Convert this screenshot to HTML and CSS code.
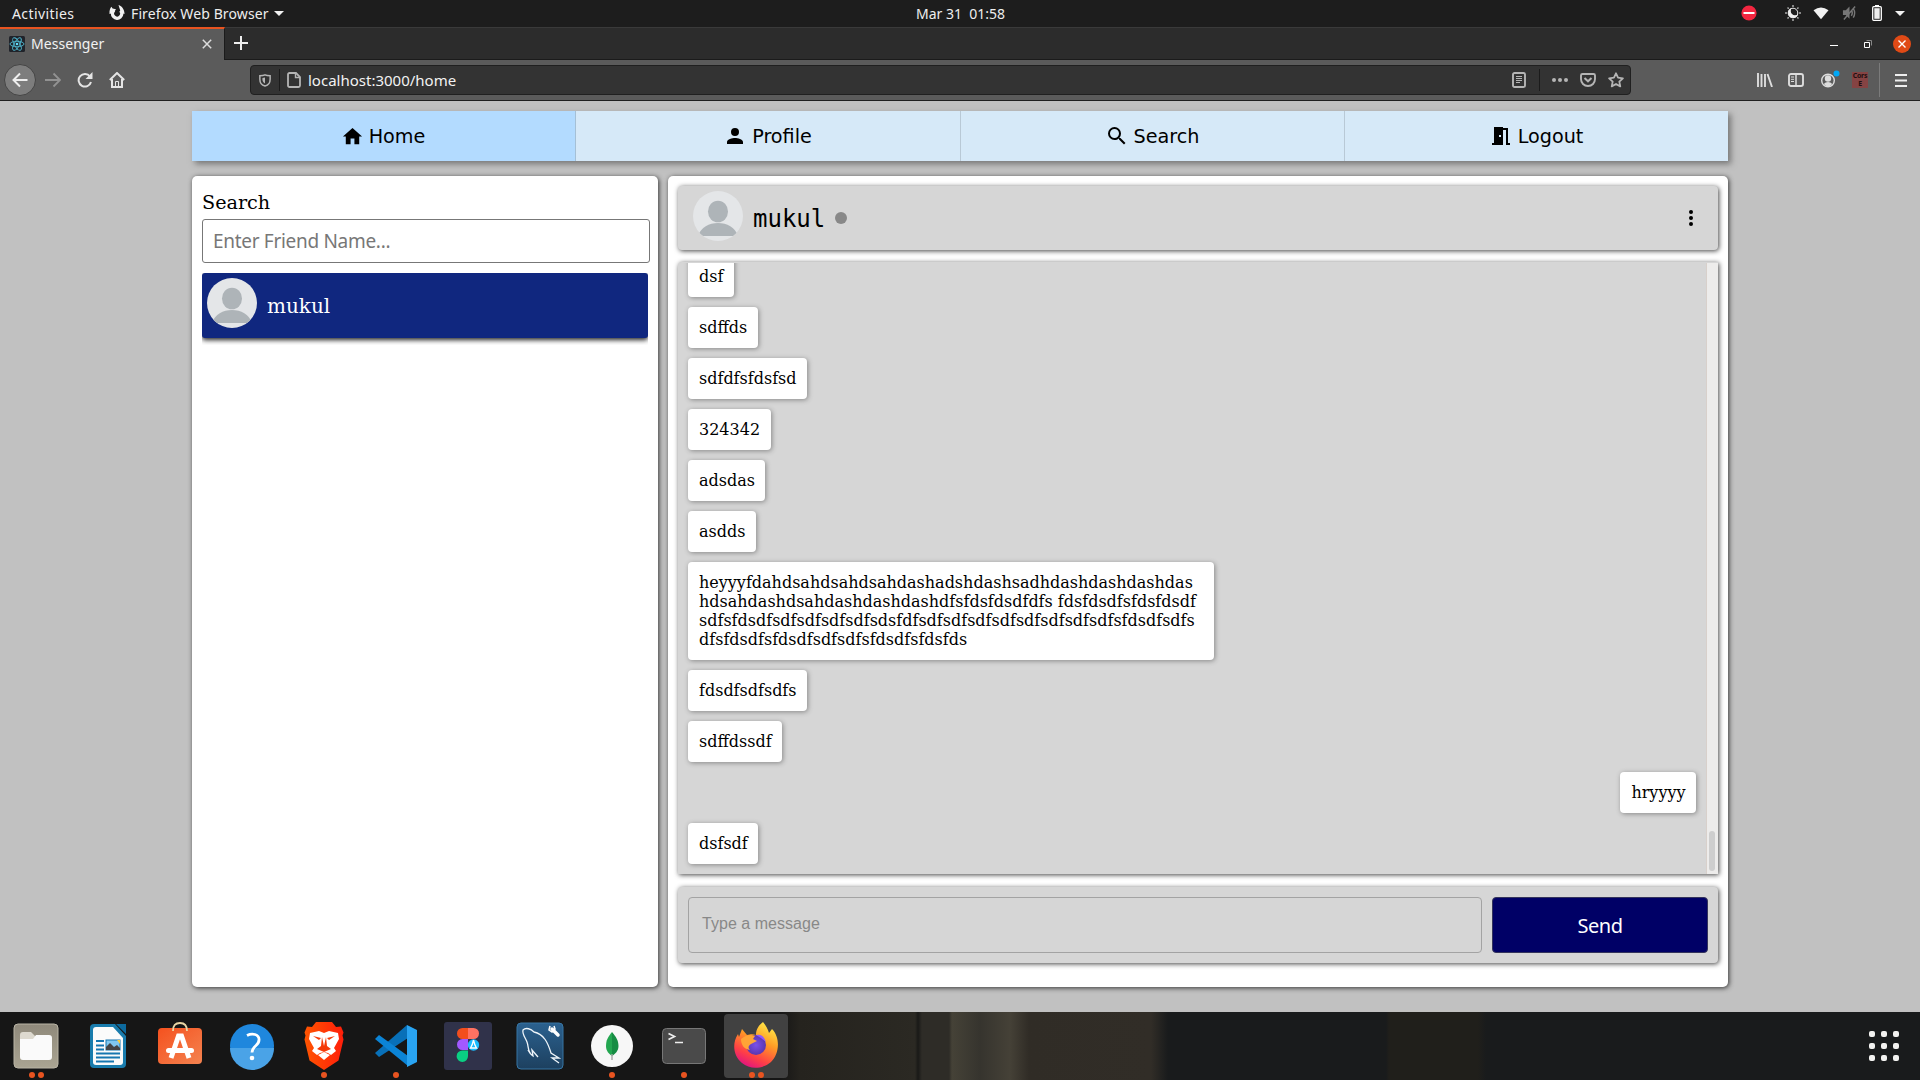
FILE: index.html
```html
<!DOCTYPE html>
<html lang="en">
<head>
<meta charset="utf-8">
<title>Messenger</title>
<link rel="stylesheet" href="styles.css">
</head>
<body>
<svg class="defs" width="0" height="0">
  <defs>
    <symbol id="avatar" viewBox="0 0 50 50">
      <clipPath id="round"><circle cx="25" cy="25" r="25"/></clipPath>
      <g clip-path="url(#round)"><rect width="50" height="50" fill="#e4e6e8"/><ellipse cx="25" cy="20.5" rx="10" ry="10.8" fill="#aeb4b8"/><path d="M5 45C8 36 16 32 25 32s17 4 20 13z" fill="#aeb4b8"/></g>
    </symbol>
    <linearGradient id="g-files" x2="0" y2="1"><stop stop-color="#8f897b"/><stop offset="1" stop-color="#aaa492"/></linearGradient>
    <linearGradient id="g-orange" x2="1" y2="1"><stop stop-color="#f5511e"/><stop offset="1" stop-color="#f48350"/></linearGradient>
    <linearGradient id="g-brave" x2="1"><stop stop-color="#ff5500"/><stop offset="1" stop-color="#ff1e0a"/></linearGradient>
    <linearGradient id="g-sql" x2="0" y2="1"><stop stop-color="#2b618f"/><stop offset="1" stop-color="#1d405f"/></linearGradient>
    <linearGradient id="g-fox" x1=".8" y1="0" x2=".3" y2="1"><stop stop-color="#fff04a"/><stop offset=".4" stop-color="#ff9b25"/><stop offset=".75" stop-color="#ff4045"/><stop offset="1" stop-color="#e01283"/></linearGradient>
    <radialGradient id="g-globe"><stop stop-color="#7b50e8"/><stop offset="1" stop-color="#5a36b0"/></radialGradient>
  </defs>
</svg>

<header class="topbar">
  <span class="activities">Activities</span>
  <svg class="ff" viewBox="0 0 16 16"><path d="M5 5.200A4.600 4.600 0 1 0 11.500 5.500" fill="none" stroke="#f2f2f2" stroke-width="3.400"/><path d="M.5 9C.3 5.500 1 3.500 2.400 1.800L3.600 3.500 7 4.200 5.500 6.500 4 8zM9.500 0c3.500 1 6 4.500 6 9l-3.500-1z" fill="#f2f2f2"/></svg>
  <span class="appname">Firefox Web Browser</span>
  <i class="caret"></i>
  <span class="clock">Mar 31&nbsp; 01:58</span>
  <div class="tray">
    <svg class="dnd" viewBox="0 0 16 16"><circle cx="8" cy="8" r="7.6" fill="#f32640"/><path d="M2.5 8h11" stroke="#fff" stroke-width="2"/></svg>
    <svg class="night" viewBox="0 0 16 16"><path d="M8 0v2M8 14v2M0 8h2M14 8h2M2.5 2.5l1.3 1.3M12.2 12.2l1.3 1.3M2.5 13.5l1.3-1.3M12.2 3.8l1.3-1.3" stroke="#aaa" stroke-width="1.5"/><circle cx="8" cy="8" r="4.8" fill="none" stroke="#eee"/><path d="M7 3a5 5 0 1 0 6 6 4 4 0 0 1-6-6z" fill="#eee"/></svg>
    <svg class="wifi" viewBox="0 0 16 16"><path d="M0 4.5Q8-1.5 16 4.5L8 14z" fill="#f2f2f2"/></svg>
    <svg class="mute" viewBox="0 0 16 16"><path d="M1 5h3l4-4v13l-4-4H1z" fill="#777"/><path d="M10 5q2 3 0 6M12 3q3 5 0 10M2 15 14 1" fill="none" stroke="#777" stroke-width="1.5"/></svg>
    <svg class="battery" viewBox="0 0 10 16"><path d="M3 0h4v2H3z" fill="#fff"/><rect x=".7" y="1.7" width="8.6" height="13.6" rx="1" fill="none" stroke="#fff" stroke-width="1.3"/><path d="M2.3 3.2h5.4v10.6H2.3z" fill="#eee"/></svg>
    <i class="caret"></i>
  </div>
</header>

<div class="tabs">
  <div class="tab">
    <svg class="react" viewBox="0 0 16 16"><rect width="16" height="16" rx="1.5" fill="#20232a"/><g fill="none" stroke="#4fb4cc" stroke-width=".9"><ellipse cx="8" cy="8" rx="7" ry="2.7"/><ellipse cx="8" cy="8" rx="7" ry="2.7" transform="rotate(60 8 8)"/><ellipse cx="8" cy="8" rx="7" ry="2.7" transform="rotate(120 8 8)"/></g><circle cx="8" cy="8" r="1.3" fill="#61dafb"/></svg>
    <span class="tabname">Messenger</span>
    <svg class="x" viewBox="0 0 10 10"><path d="M.8.8l8.4 8.4M9.2.8.8 9.2" stroke="#ddd" stroke-width="1.5"/></svg>
  </div>
  <svg class="plus" viewBox="0 0 14 14"><path d="M7 0v14M0 7h14" stroke="#eee" stroke-width="2"/></svg>
  <div class="winbtns">
    <svg class="min" viewBox="0 0 8 2"><path d="M0 .5h8" stroke="#fff"/></svg>
    <svg class="max" viewBox="0 0 8 8"><path d="M2.5.5h5v5" fill="none" stroke="#888"/><path d="M.5 2.5h5v5h-5z" fill="#2c2c2c" stroke="#fff"/></svg>
    <svg class="close" viewBox="0 0 18 18"><circle cx="9" cy="9" r="9" fill="#e04a16"/><path d="M5.5 5.5l7 7M12.5 5.5l-7 7" stroke="#fff" stroke-width="1.4"/></svg>
  </div>
</div>

<div class="toolbar">
  <span class="back"><svg viewBox="0 0 16 16"><path d="M15.5 8H1M8 1.500 1.500 8 8 14.500" fill="none" stroke="#eee" stroke-width="2"/></svg></span>
  <svg class="fwd" viewBox="0 0 16 16"><path d="M0 8h15M8.500 1.500 15 8l-6.500 6.500" fill="none" stroke="#929292" stroke-width="1.800"/></svg>
  <svg class="reload" viewBox="0 0 16 16"><path d="M13 4.500A6.300 6.300 0 1 0 14 10" fill="none" stroke="#e4e4e4" stroke-width="2"/><path d="M15.500 0v7h-7z" fill="#e4e4e4"/></svg>
  <svg class="house" viewBox="0 0 16 16"><path d="M.8 8 8 1l7.200 7M3 7v8h10V7" fill="none" stroke="#e4e4e4" stroke-width="2"/><path d="M6.500 15V9.500h3V15" fill="none" stroke="#e4e4e4"/></svg>
  <div class="url">
    <svg class="shield" viewBox="0 0 14 15"><path d="M7 1c2 1 4 1 6 1v4c0 4-2 7-6 8-4-1-6-4-6-8V2c2 0 4 0 6-1z" fill="none" stroke="#b5b5b5" stroke-width="1.700"/><path d="M7 4v7c-2-1-3-3-3-5V4.500z" fill="#b5b5b5"/></svg>
    <i class="sep"></i>
    <svg class="doc" viewBox="0 0 14 16"><path d="M3 1h6l4 4v8.500a1.500 1.500 0 0 1-1.500 1.500h-9A1.500 1.500 0 0 1 1 13.500V2.500A1.500 1.500 0 0 1 2.500 1z" fill="none" stroke="#b5b5b5" stroke-width="1.800"/><path d="M8.500 1v4.500H13" fill="none" stroke="#b5b5b5" stroke-width="1.400"/></svg>
    <span class="addr">localhost:3000/home</span>
    <svg class="reader" viewBox="0 0 14 16"><rect x="1" y="1" width="12" height="14" rx="1.500" fill="none" stroke="#b5b5b5" stroke-width="1.900"/><path d="M4 4.500h6M4 6.500h6M4 8.500h6M4 10.500h4" stroke="#b5b5b5"/></svg>
    <i class="sep sep2"></i>
    <svg class="dots" viewBox="0 0 16 4"><g fill="#b5b5b5"><circle cx="2" cy="2" r="2"/><circle cx="8" cy="2" r="2"/><circle cx="14" cy="2" r="2"/></g></svg>
    <svg class="pocket" viewBox="0 0 16 14"><path d="M2.500 1h11A1.500 1.500 0 0 1 15 2.500V6c0 4-3 7-7 7S1 10 1 6V2.500A1.500 1.500 0 0 1 2.500 1z" fill="none" stroke="#b5b5b5" stroke-width="1.900"/><path d="M4.500 5 8 8.300 11.500 5" fill="none" stroke="#b5b5b5" stroke-width="2"/></svg>
    <svg class="star" viewBox="0 0 16 16"><path d="M8 1.300l2.050 4.400 4.850.6-3.580 3.300.95 4.800L8 12l-4.270 2.400.95-4.800L1.100 6.300l4.850-.6z" fill="none" stroke="#b5b5b5" stroke-width="1.800" stroke-linejoin="round"/></svg>
  </div>
  <div class="tools">
    <svg class="lib" viewBox="0 0 16 14"><path d="M1 0v14M4.500 1v13M8 1v13M10.500 1l4.500 13" stroke="#ddd" stroke-width="1.900"/></svg>
    <svg class="side" viewBox="0 0 16 14"><rect x="1" y="1" width="14" height="12" rx="2" fill="none" stroke="#ddd" stroke-width="1.900"/><path d="M8 1v12" stroke="#ddd" stroke-width="1.500"/><path d="M3 4h3M3 6.300h3M3 8.500h3" stroke="#ddd"/></svg>
    <svg class="acct" viewBox="0 0 19 18"><circle cx="7" cy="10.500" r="6.300" fill="none" stroke="#ddd" stroke-width="1.400"/><circle cx="7" cy="8.500" r="3.200" fill="#ddd"/><path d="M2.800 14q1.500-2 4.200-2t4.200 2Q9 16.500 7 16.500T2.800 14z" fill="#ddd"/><circle cx="15.500" cy="3.500" r="3" fill="#00a8f7"/></svg>
    <span class="cors">Cors<br>E</span>
    <i class="toolsep"></i>
    <svg class="burger" viewBox="0 0 12 13"><path d="M0 1h12M0 6.500h12M0 12h12" stroke="#eee" stroke-width="2"/></svg>
  </div>
</div>

<main class="page">
  <nav class="nav">
    <a class="link active"><svg viewBox="0 0 24 24"><path d="M10 20v-6h4v6h5v-8h3L12 3 2 12h3v8z"/></svg><span>Home</span></a>
    <a class="link"><svg viewBox="0 0 24 24"><path d="M12 12a4 4 0 1 0 0-8 4 4 0 0 0 0 8zm0 2c-2.700 0-8 1.300-8 4v2h16v-2c0-2.700-5.300-4-8-4z"/></svg><span>Profile</span></a>
    <a class="link"><svg viewBox="0 0 24 24"><path d="M15.500 14h-.79l-.28-.27A6.470 6.470 0 0 0 16 9.500 6.500 6.500 0 1 0 9.500 16c1.610 0 3.090-.59 4.230-1.570l.27.28v.79l5 4.990L20.490 19zm-6 0a4.500 4.500 0 1 1 0-9 4.500 4.500 0 0 1 0 9z"/></svg><span>Search</span></a>
    <a class="link"><svg viewBox="0 0 24 24"><path d="M14 6v15H3v-2h2V3h9v1h5v15h2v2h-4V6zm-4 5v2h2v-2z"/></svg><span>Logout</span></a>
  </nav>
  <div class="columns">
    <aside class="friends">
      <label class="label">Search</label>
      <div class="field">Enter Friend Name...</div>
      <div class="clip"><div class="friend"><svg class="avatar"><use href="#avatar"/></svg><span>mukul</span></div></div>
    </aside>
    <section class="chat">
      <div class="chathead">
        <svg class="avatar"><use href="#avatar"/></svg>
        <span class="who">mukul</span><i class="status"></i>
        <svg class="more" viewBox="0 0 4 16"><circle cx="2" cy="2" r="2"/><circle cx="2" cy="8" r="2"/><circle cx="2" cy="14" r="2"/></svg>
      </div>
      <div class="messages">
        <div class="view">
          <div class="list">
            <p class="msg">dsf</p>
            <p class="msg">sdffds</p>
            <p class="msg">sdfdfsfdsfsd</p>
            <p class="msg">324342</p>
            <p class="msg">adsdas</p>
            <p class="msg">asdds</p>
            <p class="msg long">heyyyfdahdsahdsahdsahdashadshdashsadhdashdashdashdas<br>hdsahdashdsahdashdashdashdfsfdsfdsdfdfs fdsfdsdfsfdsfdsdf<br>sdfsfdsdfsdfsdfsdfsdfsdsfdfsdfsdfsdfsdfsdfsdfsdfsdfsfdsdfsdfs<br>dfsfdsdfsfdsdfsdfsdfsfdsdfsfdsfds</p>
            <p class="msg">fdsdfsdfsdfs</p>
            <p class="msg">sdffdssdf</p>
            <p class="msg mine">hryyyy</p>
            <p class="msg">dsfsdf</p>
          </div>
          <div class="track"><i class="thumb"></i></div>
        </div>
      </div>
      <div class="composer">
        <div class="input">Type a message</div>
        <div class="send">Send</div>
      </div>
    </section>
  </div>
</main>

<footer class="dock">
  <div class="app"><svg viewBox="0 0 48 48"><rect x="2" y="2" width="44" height="44" rx="4" fill="url(#g-files)" stroke="#b9b4a5"/><path d="M8 13q0-3 3-3h8l4 4h14v8H8z" fill="#ddd9cf"/><path d="M8 17h13l3-4h13q3 0 3 3v19q0 3-3 3H11q-3 0-3-3z" fill="#fafafa"/></svg><i></i><i></i></div>
  <div class="app"><svg viewBox="0 0 48 48"><path d="M6 6q0-4 4-4h21l11 12v28q0 4-4 4H10q-4 0-4-4z" fill="#197cad"/><path d="M32 2h10v10z" fill="#0d6a9e"/><path d="M9 8q0-3 3-3h17l10 11v24q0 3-3 3H12q-3 0-3-3z" fill="#fbfbfb"/><path d="M12 19h8M12 23.500h8M12 27.500h8M12 31.500h24M12 35.500h24M12 39.500h18" stroke="#1676b0" stroke-width="2"/><rect x="22" y="18" width="14" height="10" fill="#80c8f0" stroke="#1676b0"/><path d="M22 28v-3l4-4 4 4 3-2 3 3v2z" fill="#444"/><path d="M33 18h3v4z" fill="#fc3"/></svg></div>
  <div class="app"><svg viewBox="0 0 48 48"><rect x="2" y="6" width="44" height="36" rx="4" fill="url(#g-orange)"/><path d="M17 9q0-8 7-8t7 8" fill="none" stroke="#e8d5a4" stroke-width="1.800"/><path d="M15 36l7.500-22h3L33 36" fill="none" stroke="#fff" stroke-width="5"/><rect x="10" y="26" width="28" height="5" rx="2.500" fill="#fff"/></svg></div>
  <div class="app"><svg viewBox="0 0 48 48"><circle cx="24" cy="24" r="22" fill="#1f87dd"/><path d="M2 26h44a22 22 0 0 1-44 0z" fill="#4aa3e7"/><path d="M19 13.500q4-2 8-1c6 2 4.500 8 1 11-3 2.500-4 4-4 7" fill="none" stroke="#fff" stroke-width="2.800"/><circle cx="24" cy="36" r="2.300" fill="#fff"/></svg></div>
  <div class="app"><svg viewBox="0 0 48 48"><path d="M16 0h16l4 5 5-.5 2.500 6-1 3 1 4-5 21L24 48 9.500 38.500l-5-21 1-4-1-3L7 4.500l5 .5z" fill="url(#g-brave)"/><path d="M10 11l9-2 5 2 5-2 9 2 1 6-5 9 2 3-5 4-3-2-4-1-4 1-3 2-5-4 2-3-5-9z" fill="#fff"/><path d="M13 14l8 2-2 2zM35 14l-8 2 2 2zM22 15l-1 9-4 3 7 3 7-3-4-3-1-9-2 9z" fill="#f53a08"/><path d="M18 33l6-3 6 3-6 5z" fill="#fff"/></svg><i></i></div>
  <div class="app"><svg viewBox="0 0 48 48"><path d="M35 3L3 31l4 4L36 16z" fill="#0870b8"/><path d="M3 17l4-4 29 21v10z" fill="#0b84d6"/><path d="M35 3l10 5v32l-10 5z" fill="#29a4f2"/></svg><i></i></div>
  <div class="app"><svg viewBox="0 0 48 48"><rect width="48" height="48" rx="3" fill="#30324a"/><path d="M24 6h-5.500a5.500 5.500 0 0 0 0 11H24z" fill="#f24e1e"/><path d="M24 6h5.500a5.500 5.500 0 0 1 0 11H24z" fill="#ff7262"/><path d="M24 17h-5.500a5.500 5.500 0 0 0 0 11H24z" fill="#a259ff"/><path d="M24 28.500h-5.500A5.700 5.700 0 1 0 24 34z" fill="#0acf83"/><circle cx="29.500" cy="23" r="5.700" fill="#1abcfe"/><path d="M29.500 18q-1 5-3 8h6q-2-3-3-8" fill="none" stroke="#fff" stroke-width="1.300"/></svg></div>
  <div class="app"><svg viewBox="0 0 48 48"><rect x="1" y="1" width="46" height="46" rx="4" fill="url(#g-sql)" stroke="#3775a3"/><path d="M17 34c-6-4-4-9-6-14-2-5-5-8-4-12 3-3 8-1 11 2 10 2 14 11 17 21l8 5-7 0 7 5M12 28c1 2 2 4 5 6l-1-6 6 7" fill="none" stroke="#eef5fa" stroke-width="1.300"/><path d="M36 7l6 6" stroke="#fff" stroke-width="3.500" stroke-linecap="round"/><path d="M34 4l-1 4 3 2 3-3-1-3" stroke="#fff" stroke-width="1.500" fill="none"/></svg></div>
  <div class="app"><svg viewBox="0 0 48 48"><circle cx="24" cy="24" r="21" fill="#f7f7f7"/><path d="M24 10c-4 5-6 8-6 14 0 5 3 8 6 10z" fill="#23a650"/><path d="M24 10c4 5 6.500 8 6.500 14 0 5-3.500 8-6.500 10z" fill="#168c43"/><path d="M24 32v6" stroke="#aaa" stroke-width="1.500"/></svg><i></i></div>
  <div class="app"><svg viewBox="0 0 48 48"><rect x="2.500" y="6.500" width="43" height="35" rx="4" fill="#4a4a4a" stroke="#777"/><path d="M8.500 11.500l6 3-6 3M15 20.500h8" fill="none" stroke="#eee" stroke-width="1.700"/></svg><i></i></div>
  <div class="app current"><svg viewBox="0 0 48 48"><path d="M31 0c3 4 5 7 6 11l3-4c9 9 7 26-1 33-8 7-21 8-29 1C1 34 0 21 6 12l1 3 3-8 5 6c4-1 6-1 9 0 0-6 3-10 7-13z" fill="url(#g-fox)"/><circle cx="24" cy="23" r="10" fill="url(#g-globe)"/><path d="M9 17c6-5 10-4 14-3l-2 3 4 2-6 3c-3 2-3 4-1 6-6-1-9-5-9-11z" fill="#ffa436"/><path d="M24 13q7-2 10 7l-5-4z" fill="#9059ff"/></svg><i></i><i></i></div>
  <svg class="grid" viewBox="0 0 30 30"><g fill="#f2f2f0"><rect width="6" height="6" rx="2"/><rect x="12" width="6" height="6" rx="2"/><rect x="24" width="6" height="6" rx="2"/><rect y="12" width="6" height="6" rx="2"/><rect x="12" y="12" width="6" height="6" rx="2"/><rect x="24" y="12" width="6" height="6" rx="2"/><rect y="24" width="6" height="6" rx="2"/><rect x="12" y="24" width="6" height="6" rx="2"/><rect x="24" y="24" width="6" height="6" rx="2"/></g></svg>
</footer>
</body>
</html>
```
FILE: styles.css
```css
* { box-sizing: border-box; }
body { margin: 0; width: 1920px; height: 1080px; overflow: hidden; display: flex; flex-direction: column; background: #c1c1c1; font-family: "Noto Sans", sans-serif; color: #000; }
svg { display: block; flex: none; }
.defs { position: absolute; }
.caret { flex: none; border: 5px solid transparent; border-top-color: #f2f2f2; border-bottom: 0; }

.topbar { flex: none; height: 27px; background: #1d1d1d; color: #eee; display: flex; align-items: center; font-size: 14px; padding-bottom: 1px; }
.activities { margin-left: 12px; width: 97px; letter-spacing: .4px; }
.ff { width: 16px; height: 16px; margin-right: 6px; }
.appname { width: 138px; white-space: nowrap; letter-spacing: .12px; margin-right: 5px; }
.clock { margin-left: 632px; width: 100px; white-space: nowrap; letter-spacing: 0; }
.tray { display: flex; align-items: center; margin-left: auto; padding-right: 15px; }
.dnd { width: 16px; height: 16px; margin-right: 28px; }
.night { width: 16px; height: 16px; margin-right: 12px; }
.wifi { width: 16px; height: 15px; margin-right: 13px; }
.mute { width: 15px; height: 16px; margin-right: 15px; }
.battery { width: 10px; height: 16px; margin-right: 13px; }

.tabs { flex: none; height: 33px; background: #2c2c2c; border-top: 1px solid #3a3a3a; border-bottom: 1px solid #1b1b1b; display: flex; align-items: center; }
.tab { width: 225px; height: 33px; margin: -1px 0; border-top: 2px solid #e95420; background: #5b5b5b; border-right: 1px solid #1b1b1b; display: flex; align-items: center; flex: none; color: #f2f2f2; font-size: 14px; padding-bottom: 2px; }
.react { width: 16px; height: 16px; margin: 0 6px 0 9px; }
.tabname { width: 171px; letter-spacing: .05px; }
.x { width: 10px; height: 10px; }
.plus { width: 14px; height: 14px; margin-left: 9px; margin-top: -2px; }
.winbtns { display: flex; align-items: center; margin-left: auto; padding-right: 9px; }
.min { width: 8px; height: 2px; margin: 5px 26px 0 0; }
.max { width: 8px; height: 8px; margin-right: 21px; }
.close { width: 18px; height: 18px; }

.toolbar { flex: none; height: 41px; background: #5b5b5b; border-bottom: 1px solid #202020; display: flex; align-items: center; }
.back { width: 32px; height: 32px; border-radius: 50%; background: #7d7d7d; border: 1px solid #454545; margin-left: 4px; display: grid; place-items: center; }
.back svg, .fwd, .reload, .house { width: 16px; height: 16px; }
.fwd { margin-left: 9px; }
.reload { margin-left: 16px; }
.house { margin-left: 16px; }
.url { width: 1381px; height: 30px; margin-left: 125px; background: #333; border: 1px solid #202020; border-radius: 4px; display: flex; align-items: center; flex: none; }
.shield { width: 12px; height: 15px; margin-left: 8px; }
.sep { width: 1px; height: 22px; background: #1b1b1b; margin: 0 7px 0 8px; }
.doc { width: 14px; height: 16px; }
.addr { color: #f2f2f2; font-size: 15px; margin-left: 7px; flex: 1; letter-spacing: 0; }
.reader { width: 14px; height: 16px; }
.sep2 { margin: 0 12px 0 13px; }
.dots { width: 16px; height: 4px; margin-right: 12px; }
.pocket { width: 16px; height: 14px; margin-right: 12px; }
.star { width: 16px; height: 16px; margin-right: 6px; }
.tools { display: flex; align-items: center; margin-left: auto; padding-right: 13px; }
.lib { width: 16px; height: 14px; margin-right: 15px; }
.side { width: 16px; height: 14px; margin-right: 17px; }
.acct { width: 19px; height: 18px; margin: -3px 12px 0 0; }
.cors { width: 16px; height: 16px; background: #854343; color: #1f1010; font: bold 7px/8px "Noto Sans", sans-serif; text-align: center; letter-spacing: -.2px; margin-right: 11px; }
.toolsep { width: 1px; height: 34px; background: #7b7b7b; margin-right: 15px; }
.burger { width: 12px; height: 13px; }

.page { flex: none; height: 911px; padding: 10px 192px 25px; display: flex; flex-direction: column; }
.nav { flex: none; height: 50px; display: grid; grid-template-columns: repeat(4, 1fr); background: #d6e9f8; box-shadow: 3px 3px 6px #777; }
.link { display: flex; align-items: center; justify-content: center; gap: 5px; font: 19.2px/24px "DejaVu Sans", sans-serif; border-left: 1px solid #b9c9d6; }
.link span { padding-top: 2px; }
.link:first-child { border-left: 0; border-right: 1px solid #a5c0d6; }
.link:nth-child(2) { border-left: 0; }
.link svg { width: 24px; height: 24px; margin-left: -1px; }
.active svg { width: 23px; height: 23px; }
.active { background: #b3dbff; }
.columns { flex: 1; margin-top: 15px; display: flex; gap: 10px; font-family: "DejaVu Serif", serif; }
.friends { width: 466px; background: #fff; border-radius: 5px; box-shadow: 1px 1px 5px #333; padding: 14px 8px 0 10px; }
.label { display: block; height: 29px; font-size: 19.2px; line-height: 25px; }
.field { width: 448px; height: 44px; border: 1px solid #777; border-radius: 3px; padding-left: 10px; font: 19px/43px "Noto Sans", sans-serif; color: #777; letter-spacing: -.3px; }
.clip { margin-top: 10px; width: 446px; height: 72px; overflow: hidden; }
.friend { height: 65px; background: #10277f; border-radius: 3px; box-shadow: 0 2px 5px #222; color: #fff; display: flex; padding: 5px; font-size: 20px; line-height: 56px; }
.avatar { width: 50px; height: 50px; margin-right: 10px; }
.chat { flex: 1; background: #fff; border-radius: 5px; box-shadow: 1px 1px 5px #333; padding: 10px; }
.chathead, .messages, .composer { background: #d6d6d6; box-shadow: 1px 1px 5px #444; border-radius: 4px; }
.chathead { height: 64px; padding: 5px 25px 0 15px; display: flex; }
.who { font: 24px/57px "DejaVu Sans Mono", monospace; width: 72px; }
.status { width: 12px; height: 12px; border-radius: 50%; background: #888; margin: 21px 0 0 10px; }
.more { width: 4px; height: 16px; margin: 19px 0 0 auto; }
.messages { margin-top: 12px; height: 612px; padding-top: 1px; border-radius: 4px 0 0 0; }
.view { height: 611px; display: flex; overflow: hidden; }
.list { flex: 1; display: flex; flex-direction: column; justify-content: flex-end; align-items: flex-start; gap: 10px; padding: 0 10px 10px; }
.msg { margin: 0; padding: 11px 10.500px 11px 11px; background: #fff; border-radius: 4px; box-shadow: 1px 1px 5px #888; font-size: 16px; line-height: 19px; white-space: nowrap; flex: none; }
.long { width: 526px; }
.mine { align-self: flex-end; }
.track { width: 12px; background: #edeceb; border-left: 1px solid #d8d0cb; display: flex; align-items: flex-end; padding: 0 3px 3px 2px; }
.thumb { width: 6px; height: 40px; border-radius: 3px; background: #cecece; }
.composer { margin-top: 13px; height: 76px; display: flex; gap: 10px; padding: 10px; }
.input { flex: none; width: 794px; height: 56px; border: 1px solid #a3a3a3; border-radius: 4px; padding-left: 13px; font: 16px/52px "Liberation Sans", sans-serif; color: #888; letter-spacing: .03px; }
.send { flex: 1; height: 56px; background: #000066; border: 1px solid #34345c; border-radius: 4px; color: #fff; font: 20px/56px "Noto Sans", sans-serif; text-align: center; letter-spacing: -.5px; }

.dock { flex: none; height: 68px; display: flex; padding-left: 4px; background: linear-gradient(90deg, #161616 0 780px, #25231e 800px, #2b2923 915px, #191917 918px, #2e2c27 922px 949px, #454237 952px, #36342e 980px, #454137 1010px, #302c26 1029px, #312d27 1151px, #191b1c 1168px 1386px, #201f1b 1389px 1478px, #191b1c 1486px); }
.app { width: 64px; height: 64px; margin: 2px 8px 0 0; border-radius: 4px; display: flex; flex-wrap: wrap; justify-content: center; align-content: flex-start; padding-top: 8px; gap: 0 3px; }
.app svg { width: 48px; height: 48px; margin: 0 8px; }
.app i { width: 6px; height: 6px; border-radius: 50%; background: #e95420; margin-top: 2px; }
.current { background: #414141; }
.grid { width: 30px; height: 30px; margin: 19px 21px 0 auto; }
```
